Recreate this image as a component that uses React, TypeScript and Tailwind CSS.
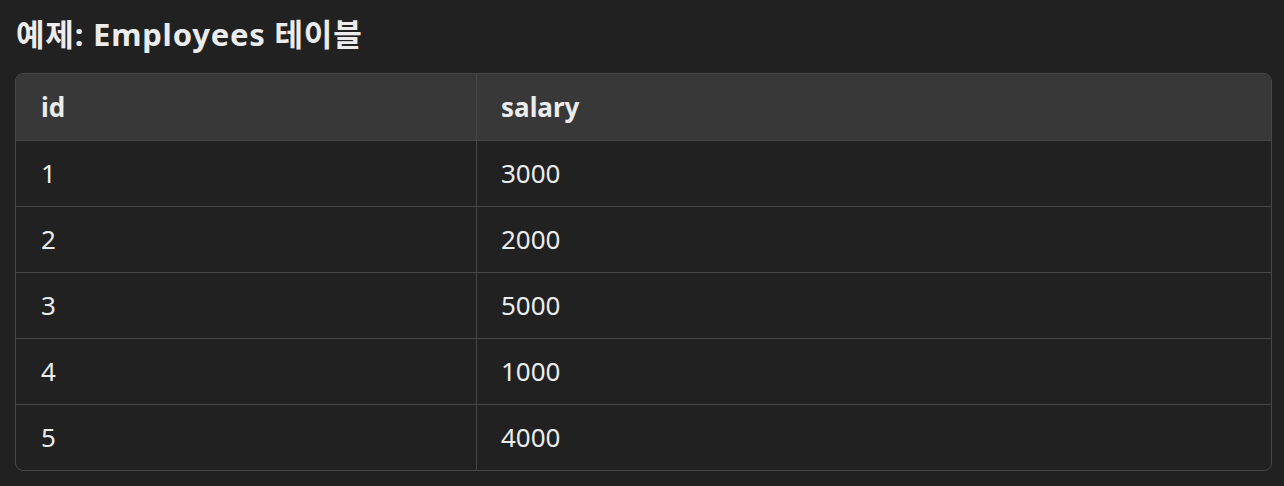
const rows = [
  { id: "1", salary: "3000" },
  { id: "2", salary: "2000" },
  { id: "3", salary: "5000" },
  { id: "4", salary: "1000" },
  { id: "5", salary: "4000" },
];

export default function App() {
  return (
    <div
      className="min-h-screen w-full bg-[#212121] px-[15px] pt-[14px] text-[#ececec]"
      style={{ fontFamily: '"Noto Sans", "Noto Sans CJK KR", sans-serif' }}
    >
      <h2 className="mb-[18px] pl-[1px] text-[31px] font-bold leading-[41px] tracking-[0.8px]">예제: Employees 테이블</h2>

      <div className="w-[1257px] overflow-hidden rounded-lg border border-[#474747]">
        {/* header */}
        <div className="grid h-[66px] grid-cols-[461px_1fr] bg-[#383838] text-[26px] font-bold">
          <div className="flex items-center border-r border-[#474747] px-[25px]">id</div>
          <div className="flex items-center px-[24px]">salary</div>
        </div>

        {/* body */}
        {rows.map((r) => (
          <div key={r.id} className="grid h-[66px] grid-cols-[461px_1fr] border-t border-[#474747] text-[26px]">
            <div className="flex items-center border-r border-[#474747] px-[25px]">{r.id}</div>
            <div className="flex items-center px-[24px]">{r.salary}</div>
          </div>
        ))}
      </div>
    </div>
  );
}
